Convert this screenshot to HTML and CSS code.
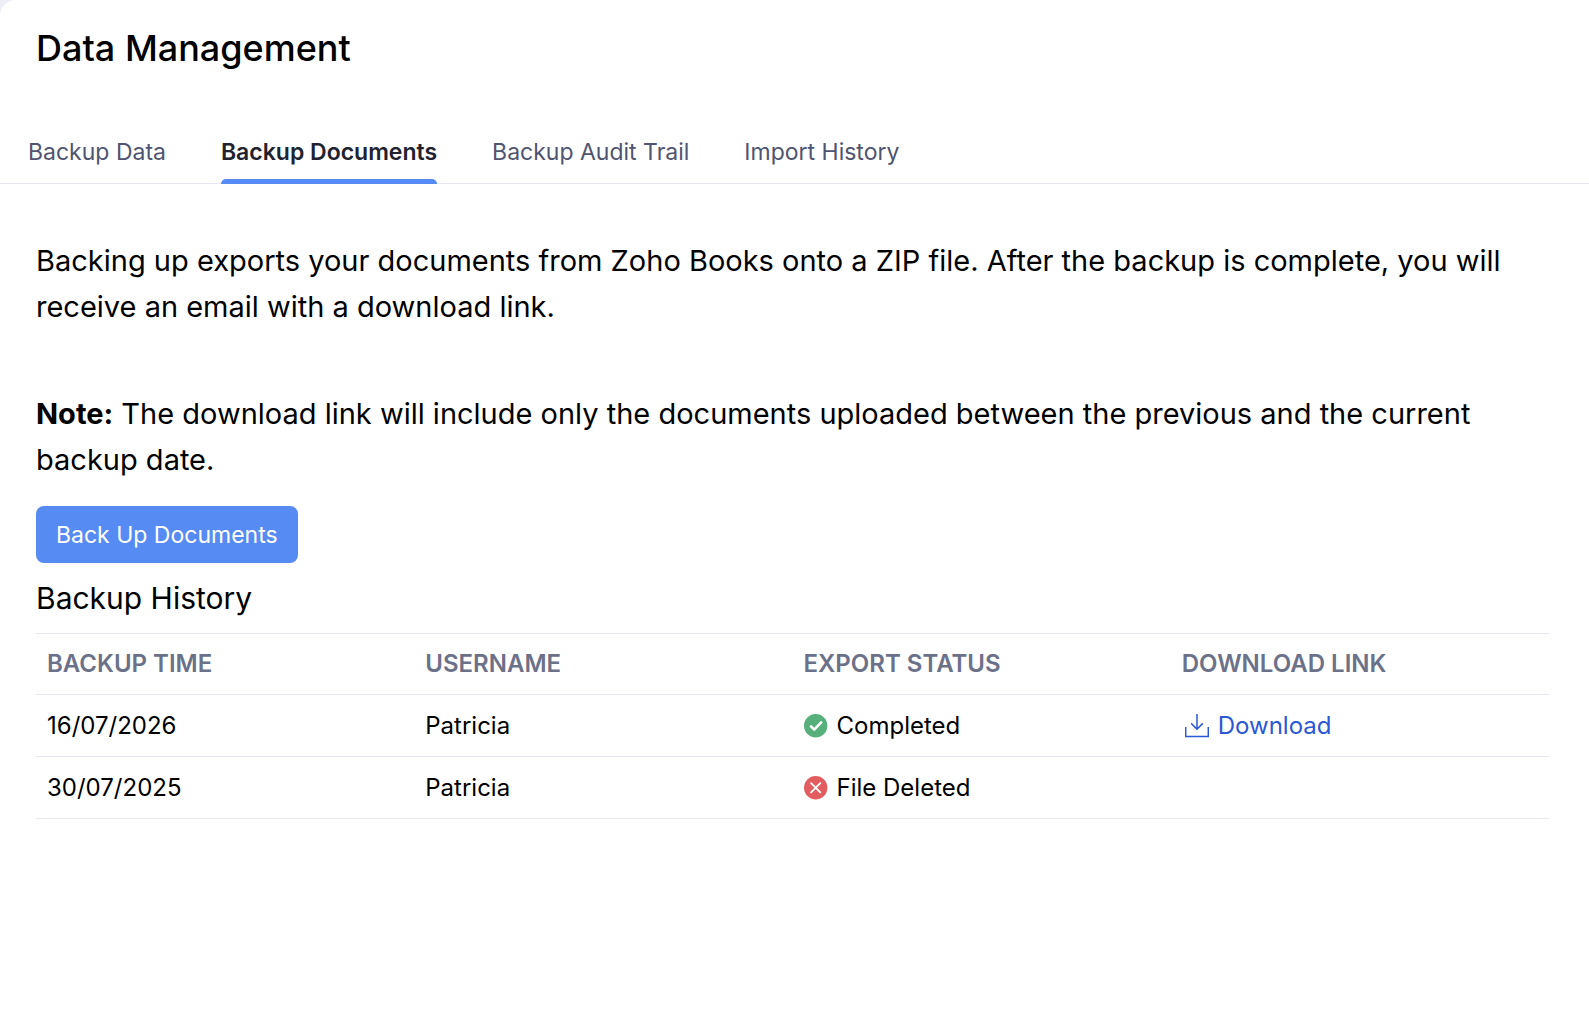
FILE: index.html
```html
<!DOCTYPE html>
<html lang="en">
<head>
	<meta charset="utf-8">
	<meta name="viewport" content="width=device-width, initial-scale=1">
	<title>Data Management</title>
	<link rel="stylesheet" href="styles.css">
</head>
<body>

<div class="page">
	<header class="page-header">
		<h1>Data Management</h1>
	</header>

	<nav class="tabs">
		<a href="#backup-data">Backup Data</a>
		<a href="#backup-documents" class="active" aria-current="page">Backup Documents</a>
		<a href="#backup-audit-trail">Backup Audit Trail</a>
		<a href="#import-history">Import History</a>
	</nav>

	<main class="content">
		<p>Backing up exports your documents from Zoho Books onto a ZIP file. After the backup is complete, you will receive an email with a download link.</p>
		<p><strong>Note:</strong> The download link will include only the documents uploaded between the previous and the current backup date.</p>

		<button type="button" class="btn">Back Up Documents</button>

		<h2 id="history-title">Backup History</h2>
		<table class="history" aria-labelledby="history-title">
			<thead>
				<tr>
					<th scope="col">BACKUP TIME</th>
					<th scope="col">USERNAME</th>
					<th scope="col">EXPORT STATUS</th>
					<th scope="col">DOWNLOAD LINK</th>
				</tr>
			</thead>
			<tbody>
				<tr>
					<td>16/07/2026</td>
					<td>Patricia</td>
					<td>
						<span class="status">
							<svg class="icon" viewBox="0 0 24 24" aria-hidden="true">
								<circle cx="11.7" cy="11.7" r="11.7" fill="#57b07c"/>
								<path d="M7 12.4l3.2 3.2 7-7.2" fill="none" stroke="#fff" stroke-width="2.6" stroke-linecap="round" stroke-linejoin="round"/>
							</svg>
							Completed
						</span>
					</td>
					<td>
						<a href="#download" class="status download">
							<svg class="icon" viewBox="0 0 24 24" aria-hidden="true">
								<path d="M.7 13v9.5h22.6V13M12 0v15M6.2 9.4l5.8 5.8 5.8-5.8" fill="none" stroke="currentColor" stroke-width="1.5"/>
							</svg>
							Download
						</a>
					</td>
				</tr>
				<tr>
					<td>30/07/2025</td>
					<td>Patricia</td>
					<td>
						<span class="status">
							<svg class="icon" viewBox="0 0 24 24" aria-hidden="true">
								<circle cx="11.7" cy="11.7" r="11.7" fill="#e35d60"/>
								<path d="M7.1 7.1l9.2 9.2M16.3 7.1l-9.2 9.2" fill="none" stroke="#fff" stroke-width="1.8" stroke-linecap="round"/>
							</svg>
							File Deleted
						</span>
					</td>
					<td></td>
				</tr>
			</tbody>
		</table>
	</main>
</div>

</body>
</html>
```
FILE: styles.css
```css
* {
	box-sizing: border-box;
}

body {
	margin: 0;
	background: #eeeef8;
	color: #000;
	font-family: Inter, sans-serif;
	font-size: 24px;
	line-height: 32px;
}

.page {
	min-height: 100vh;
	background: #fff;
	border-top-left-radius: 16px;
}

.page-header {
	padding: 24px 36px 64px;
}

h1 {
	margin: 0;
	font-size: 36px;
	font-weight: 500;
	line-height: 48px;
}

.tabs {
	display: flex;
	gap: 55px;
	padding: 0 28px;
	border-bottom: 1px solid #e7e7f1;
	font-size: 23px;
}

.tabs a {
	margin-bottom: -1px;
	color: #4f5470;
	text-decoration: none;
}

.tabs a::after {
	content: "";
	display: block;
	height: 5px;
	margin-top: 11px;
	border-radius: 5px 5px 0 0;
}

.tabs .active {
	color: #21222f;
	font-weight: 600;
}

.tabs .active::after {
	background: #568bf3;
}

.content {
	padding: 54px 40px 40px 36px;
}

.content p {
	margin: 0 0 61px;
	font-size: 29px;
	line-height: 46px;
}

.content p + p {
	margin-bottom: 23px;
}

.btn {
	display: block;
	padding: 13px 20px 12px;
	border: 0;
	border-radius: 8px;
	background: #568bf3;
	color: #fff;
	font: inherit;
	font-size: 23px;
	cursor: pointer;
}

h2 {
	margin: 16px 0;
	font-size: 30px;
	font-weight: 400;
	line-height: 38px;
}

.history {
	width: 100%;
	border-collapse: collapse;
	table-layout: fixed;
	border-top: 1px solid #e7e7f1;
}

.history th,
.history td {
	padding: 0 11px;
	border-bottom: 1px solid #e7e7f1;
	text-align: left;
}

.history th {
	height: 61px;
	color: #6c718a;
	font-weight: 600;
}

.history td {
	height: 62px;
}

.status {
	display: flex;
	align-items: center;
	gap: 9px;
}

.icon {
	flex: none;
	width: 24px;
	height: 24px;
}

.download {
	padding-left: 3px;
	color: #2b58d3;
	text-decoration: none;
}
```
